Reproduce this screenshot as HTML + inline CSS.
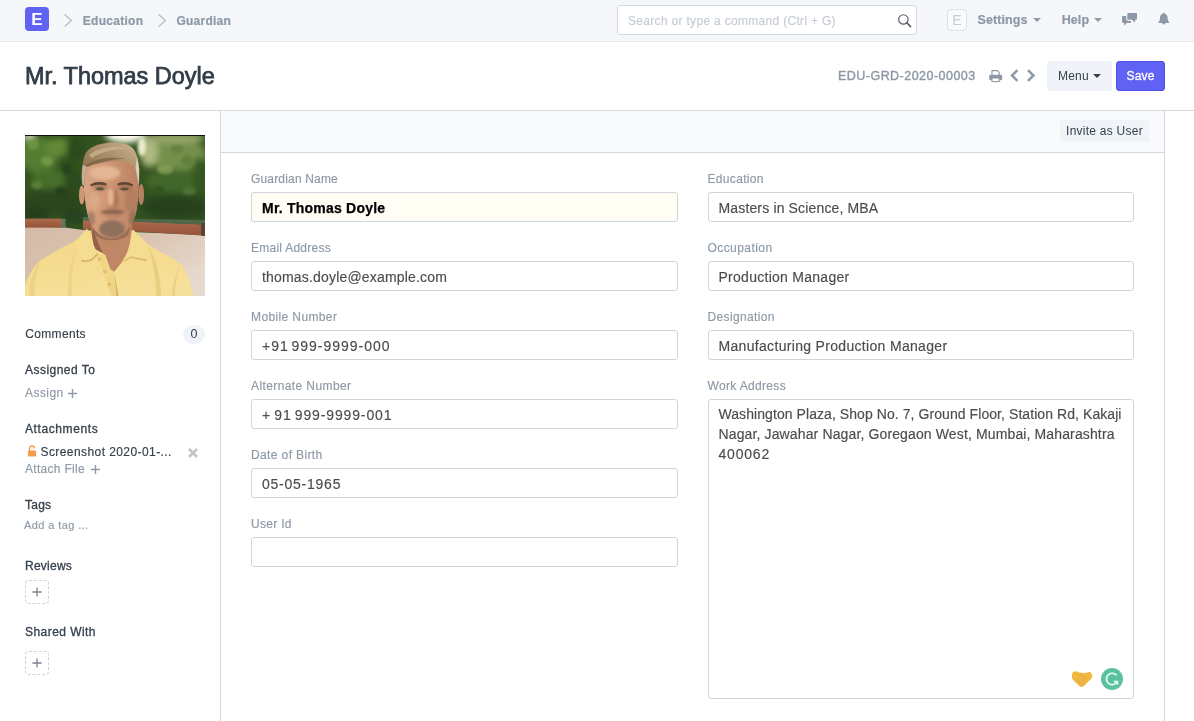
<!DOCTYPE html>
<html lang="en">
<head>
<meta charset="utf-8">
<title>Mr. Thomas Doyle - Guardian</title>
<style>
*{box-sizing:border-box;margin:0;padding:0}
html,body{width:1194px;height:721px;overflow:hidden;background:#fff}
body{will-change:transform;font-family:"Liberation Sans",sans-serif;font-size:12px;color:#36414c;position:relative}
.abs{position:absolute;white-space:nowrap}
.t{position:absolute;white-space:nowrap;line-height:16px;height:16px;-webkit-text-stroke:0.15px}
/* navbar */
#nav{position:absolute;left:0;top:0;width:1194px;height:42px;background:#f5f7fa;border-bottom:1px solid #e6eaee}
#logo{position:absolute;left:25px;top:7px;width:24px;height:24px;border-radius:4px;background:#6062f4;color:#fff;font-weight:bold;font-size:17px;line-height:25px;text-align:center}
.crumb{font-weight:bold;color:#8d99a6;font-size:12px;-webkit-text-stroke:0.2px #8d99a6}
#search{position:absolute;left:617px;top:5px;width:300px;height:30px;border:1px solid #d4d9de;border-radius:3px;background:#fff}
.ph{color:#c5ccd3;font-size:12px}
#avatar{position:absolute;left:947px;top:9px;width:20px;height:22px;border:1px solid #dce1e6;border-radius:4px;background:#fafbfc;color:#c6cdd4;font-size:14px;line-height:20px;text-align:center}
.navlink{font-weight:bold;color:#8d99a6;font-size:12px;-webkit-text-stroke:0.2px #8d99a6}
.caret{position:absolute;width:0;height:0;border-left:4px solid transparent;border-right:4px solid transparent;border-top:4px solid #8d99a6}
/* page head */
#head{position:absolute;left:0;top:42px;width:1194px;height:69px;background:#fff;border-bottom:1px solid #d1d8dd}
#title{position:absolute;left:25px;top:61px;font-size:23.5px;line-height:30px;color:#323c48;white-space:nowrap;-webkit-text-stroke:0.75px #323c48;letter-spacing:-0.03px}
.btn{position:absolute;height:30px;border-radius:3px;font-size:12px;line-height:30px;text-align:center;white-space:nowrap}
/* sidebar */
#vline1{position:absolute;left:220px;top:111px;width:1px;height:610px;background:#d4d8de}
#vline2{position:absolute;left:1164px;top:111px;width:1px;height:610px;background:#d4d8de}
#formhead{position:absolute;left:221px;top:111px;width:943px;height:42px;background:#f8fafc;border-bottom:1px solid #d1d8dd}
.sb-label{color:#36414c;font-size:12px}
.sb-muted{color:#8d99a6;font-size:12px}
.plusbox{position:absolute;width:24px;height:24px;border:1px dashed #ccd2d8;border-radius:4px}
.plusbox svg{position:absolute;left:6px;top:6px}
/* form */
.lbl{position:absolute;white-space:nowrap;color:#8d99a6;font-size:12px;line-height:16px;-webkit-text-stroke:0.15px}
.inp{position:absolute;height:30px;border:1px solid #cfd5da;border-radius:3px;background:#fff;font-size:14px;line-height:28px;padding:1px 0 0 10px;color:#4c4c4c;white-space:nowrap;overflow:hidden;letter-spacing:0.18px;-webkit-text-stroke:0.15px}
.inp.bold{background:#fffdf4;font-weight:bold;color:#000;-webkit-text-stroke:0.25px;letter-spacing:0.22px;padding-top:1px}
#ta{position:absolute;left:708px;top:399px;width:426px;height:300px;border:1px solid #cfd5da;border-radius:3px;background:#fff;font-size:14px;line-height:20px;padding:4px 9.5px;color:#4c4c4c;letter-spacing:0.07px;-webkit-text-stroke:0.15px}
</style>
</head>
<body>
<div id="nav">
  <div id="logo">E</div>
  <svg class="abs" style="left:62px;top:12px" width="12" height="17" viewBox="0 0 12 17"><path d="M2.6 2.5 L9.4 8.5 L2.6 14.5" fill="none" stroke="#b9c1c9" stroke-width="1.5"/></svg>
  <div class="t crumb" style="left:82.8px;top:13px;letter-spacing:0.27px">Education</div>
  <svg class="abs" style="left:156px;top:12px" width="12" height="17" viewBox="0 0 12 17"><path d="M2.6 2.5 L9.4 8.5 L2.6 14.5" fill="none" stroke="#b9c1c9" stroke-width="1.5"/></svg>
  <div class="t crumb" style="left:176.5px;top:13px;letter-spacing:0.22px">Guardian</div>
  <div id="search"></div>
  <div class="t ph" style="left:628px;top:12.7px;letter-spacing:0.31px">Search or type a command (Ctrl + G)</div>
  <svg class="abs" style="left:896px;top:12px" width="17" height="17" viewBox="0 0 17 17"><circle cx="7.4" cy="7.4" r="4.7" fill="none" stroke="#555d66" stroke-width="1.15"/><path d="M10.9 10.9 L14.6 14.6" stroke="#555d66" stroke-width="1.5" stroke-linecap="round"/></svg>
  <div id="avatar">E</div>
  <div class="t navlink" style="left:977.5px;top:12px;font-size:12.5px;letter-spacing:0.1px">Settings</div>
  <div class="caret" style="left:1033px;top:18px"></div>
  <div class="t navlink" style="left:1061.7px;top:12px;font-size:12.5px;letter-spacing:0.1px">Help</div>
  <div class="caret" style="left:1094px;top:18px"></div>
  <svg class="abs" style="left:1121px;top:12px" width="18" height="16" viewBox="0 0 18 16"><path d="M2 4 H9 a1 1 0 0 1 1 1 V9.9 a1 1 0 0 1 -1 1 H5.6 L3.2 14 L3.2 10.9 H2 a1 1 0 0 1 -1 -1 V5 a1 1 0 0 1 1 -1z" fill="#8d99a6"/><path d="M7.3 1.1 H15 a1 1 0 0 1 1 1 V6.8 a1 1 0 0 1 -1 1 H14.2 L14 10.8 L11 7.8 H7.3 a1 1 0 0 1 -1 -1 V2.1 a1 1 0 0 1 1 -1z" fill="#8d99a6" stroke="#f5f7fa" stroke-width="2.2" paint-order="stroke"/></svg>
  <svg class="abs" style="left:1157px;top:12px" width="14" height="14" viewBox="0 0 14 14"><path d="M6.8 0.8 C7.4 0.8 7.8 1.2 7.8 1.8 C9.6 2.3 10.6 3.8 10.6 5.8 C10.6 8 11.1 9.2 12.2 10.2 L12.2 10.9 L1.4 10.9 L1.4 10.2 C2.5 9.2 3 8 3 5.8 C3 3.8 4 2.3 5.8 1.8 C5.8 1.2 6.2 0.8 6.8 0.8 Z M5.3 10.9 H8.3 A1.5 1.7 0 0 1 5.3 10.9 Z" fill="#8d99a6"/></svg>
</div>

<div id="head"></div>
<div id="title">Mr. Thomas Doyle</div>
<div class="t" style="left:838px;top:68px;color:#8d99a6;font-size:12.5px;letter-spacing:0.47px;-webkit-text-stroke:0.4px #8d99a6">EDU-GRD-2020-00003</div>
<svg class="abs" style="left:988px;top:69px" width="16" height="15" viewBox="0 0 16 15"><path d="M4 6 V1.6 h5.4 l1.8 1.8 V6" fill="#fff" stroke="#8d99a6" stroke-width="1.1"/><rect x="1.2" y="5.8" width="13" height="5.4" rx="1.2" fill="#8d99a6"/><rect x="4" y="9" width="7.2" height="3.6" fill="#fff" stroke="#8d99a6" stroke-width="1.1"/></svg>
<svg class="abs" style="left:1009px;top:68px" width="12" height="16" viewBox="0 0 12 16"><path d="M8.4 2.1 L3 7.5 L8.4 12.9" fill="none" stroke="#8d99a6" stroke-width="2.5"/></svg>
<svg class="abs" style="left:1025px;top:68px" width="12" height="16" viewBox="0 0 12 16"><path d="M3 2.1 L8.4 7.5 L3 12.9" fill="none" stroke="#8d99a6" stroke-width="2.5"/></svg>
<div class="btn" style="left:1047px;top:61px;width:65px;background:#f0f3f7;color:#36414c;text-align:left;padding-left:11px;letter-spacing:0.2px">Menu</div>
<div class="caret" style="left:1093px;top:74px;border-top-color:#36414c"></div>
<div class="btn" style="left:1116px;top:61px;width:49px;background:#6062f4;color:#fff;border:1px solid #4d4fe0;line-height:28px;letter-spacing:0.15px;-webkit-text-stroke:0.3px #fff">Save</div>

<div id="vline1"></div>
<div id="vline2"></div>
<div id="formhead"></div>
<div class="btn" style="left:1060px;top:120px;width:89px;height:22px;line-height:22px;background:#f0f3f7;color:#36414c;letter-spacing:0.25px">Invite as User</div>

<!-- sidebar -->
<svg id="photo" class="abs" style="left:25px;top:135px" width="180" height="161" viewBox="0 0 180 161">
<defs>
<filter id="b05" x="-20%" y="-20%" width="140%" height="140%"><feGaussianBlur stdDeviation="0.45"/></filter>
<filter id="b1" x="-20%" y="-20%" width="140%" height="140%"><feGaussianBlur stdDeviation="0.8"/></filter>
<filter id="b2" x="-30%" y="-30%" width="160%" height="160%"><feGaussianBlur stdDeviation="1.8"/></filter>
<filter id="b4" x="-40%" y="-40%" width="180%" height="180%"><feGaussianBlur stdDeviation="3.2"/></filter>
<clipPath id="fc"><path d="M58.5 34 C60 26 72 22 88 22 C104 22 112 26 113.5 34 C114.5 46 114 60 111.5 76 C109 88 102 98 94 102 C89 104 82 104 77 101 C70 97 65 89 62.5 79 C59.5 66 58 48 58.5 34 Z"/></clipPath><clipPath id="pc"><rect x="0" y="0" width="180" height="161"/></clipPath>
<linearGradient id="pave" x1="0" y1="0" x2="1" y2="0.6"><stop offset="0" stop-color="#d3baa6"/><stop offset="0.6" stop-color="#dbc5b3"/><stop offset="1" stop-color="#e6d8cc"/></linearGradient>
<linearGradient id="skin" x1="0" y1="0" x2="1" y2="0"><stop offset="0" stop-color="#d9a583"/><stop offset="0.45" stop-color="#cf9674"/><stop offset="1" stop-color="#ba8263"/></linearGradient>
<linearGradient id="hair" x1="0" y1="1" x2="1" y2="0"><stop offset="0" stop-color="#7a5f45"/><stop offset="0.5" stop-color="#a48764"/><stop offset="1" stop-color="#cdb48e"/></linearGradient>
<linearGradient id="shirt" x1="0" y1="0" x2="0.3" y2="1"><stop offset="0" stop-color="#f3d786"/><stop offset="1" stop-color="#f6df98"/></linearGradient>
<linearGradient id="brick" x1="0" y1="0" x2="0" y2="1"><stop offset="0" stop-color="#ad6a4b"/><stop offset="1" stop-color="#95533b"/></linearGradient>
</defs>
<g clip-path="url(#pc)">
<rect x="0" y="0" width="180" height="100" fill="#33521f"/>
<g filter="url(#b4)">
  <ellipse cx="14" cy="20" rx="20" ry="18" fill="#557d32"/>
  <ellipse cx="34" cy="12" rx="14" ry="9" fill="#648a38"/>
  <ellipse cx="50" cy="14" rx="9" ry="12" fill="#2b481c"/>
  <ellipse cx="26" cy="44" rx="20" ry="10" fill="#476d2b"/>
  <ellipse cx="48" cy="46" rx="9" ry="12" fill="#2c4a1e"/>
  <ellipse cx="26" cy="68" rx="34" ry="12" fill="#29451e"/>
  <ellipse cx="8" cy="80" rx="16" ry="6" fill="#253e1b"/>
  <ellipse cx="50" cy="82" rx="12" ry="7" fill="#264222"/>
  <ellipse cx="152" cy="20" rx="30" ry="16" fill="#74904c"/>
  <ellipse cx="124" cy="16" rx="9" ry="16" fill="#b0b982"/>
  <ellipse cx="150" cy="3" rx="30" ry="6" fill="#95a568"/>
  <ellipse cx="150" cy="46" rx="30" ry="12" fill="#42662c"/>
  <ellipse cx="150" cy="72" rx="34" ry="13" fill="#28431d"/>
  <ellipse cx="174" cy="40" rx="7" ry="18" fill="#345824"/>
  <ellipse cx="100" cy="-1" rx="20" ry="9" fill="#ffffef"/>
  <ellipse cx="4" cy="1" rx="6" ry="3.5" fill="#e6eccf"/>
</g>
<g filter="url(#b2)">
  <ellipse cx="22" cy="26" rx="6" ry="5" fill="#719744"/>
  <ellipse cx="42" cy="34" rx="5" ry="6" fill="#28431a"/>
  <ellipse cx="8" cy="10" rx="6" ry="5" fill="#6a9240"/>
  <ellipse cx="12" cy="50" rx="6" ry="4" fill="#577f35"/>
  <ellipse cx="36" cy="56" rx="6" ry="4" fill="#253f1a"/>
  <ellipse cx="140" cy="34" rx="8" ry="5" fill="#7d9a50"/>
  <ellipse cx="162" cy="26" rx="6" ry="6" fill="#62803e"/>
  <ellipse cx="134" cy="56" rx="6" ry="5" fill="#305422"/>
  <ellipse cx="164" cy="56" rx="7" ry="4" fill="#4c7331"/>
  <ellipse cx="152" cy="14" rx="7" ry="4" fill="#66803f"/>
  <ellipse cx="117" cy="12" rx="4" ry="9" fill="#e9ebcc"/>
</g>
<polygon points="0,91.5 40,92.5 58,95 180,100 180,161 0,161" fill="url(#pave)"/>
<g filter="url(#b05)">
  <rect x="-2" y="83.6" width="39" height="9" fill="url(#brick)"/>
  <rect x="37" y="83.8" width="3.5" height="9" fill="#5d7a68"/>
  <polygon points="58,85 120,87 176.5,89.5 176.5,100.5 120,97 58,94.5" fill="url(#brick)"/>
  <polygon points="58,82 108,84 180,85 180,89.5 108,86.8 58,85.5" fill="#50684a"/>
  <rect x="176.3" y="88" width="4" height="13" fill="#5e4034"/>
</g>
<!-- shirt body -->
<g filter="url(#b05)">
<path d="M-1 161 L-1 153 C2 142 8 132 16 125 C24 120 36 113 49 106.5 L62 96 L108 96 L124 110.5 C132 115 146 122 156 129 C162 136 165 146 168.5 161 Z" fill="url(#shirt)"/>
<path d="M16 126 C11 136 9 148 10 161 L4 161 C4 148 8 134 16 126 Z" fill="#e9cc7c" opacity="0.6"/>
<path d="M124 112 C132 126 136 144 136 161 L131 161 C131 146 128 128 124 112 Z" fill="#e6c877" opacity="0.7"/>
<path d="M52 112 C48 124 46 142 47 161 L43 161 C42 142 46 124 52 112 Z" fill="#e9cc7c" opacity="0.6"/>
<path d="M156 130 C152 140 150 150 150 161 L147 161 C147 150 151 138 156 130 Z" fill="#e6c877" opacity="0.6"/>
<!-- neck -->
<path d="M66 88 L66.5 96 C67.5 104 68.5 110 70 114 L80.5 119.5 L85 134 L89 137 L97 127 L104.5 113.5 L106.5 96 L107 88 Z" fill="#c08766"/>
<path d="M66.5 96 C67.5 104 68.5 110 70 114 L80.5 119.5 L84 128 C78 119 71.5 106 68.5 94 Z" fill="#93644a"/>
<path d="M70 100 C76 107 96 107 103 100 L105.5 92 L67 92 Z" fill="#9c6c52"/>
<!-- collars -->
<path d="M62 93.5 L49.5 108 C52 115 54 121 56.5 126.5 C60 127.5 64 127 67 125.5 L73.5 119.5 C69 112 65 102 62 93.5 Z" fill="#f4dc90"/>
<path d="M56.5 126.5 C60 127.5 64 127 67 125.5 L73.5 119.5 L72.5 118 L66 124 C63 125.3 59.5 125.6 56 124.6 Z" fill="#d8b768"/>
<path d="M107.5 94 L123.5 110 C123 116 122.5 121 121.5 126 L106 123 L98.5 127 C103 117 106 106 107.5 94 Z" fill="#f4dc90"/>
<path d="M121.5 126 L106 123 L98.5 127 L99.5 125.2 L106 121.6 L121.8 124.4 Z" fill="#d8b768"/>
<!-- placket -->
<path d="M73 119.5 L80.5 119.5 L85 134 L89 137 L91 161 L86 161 Z" fill="#f0d584"/>
<path d="M89 137 L91.5 161 L93.5 161 Z" fill="#cfae62"/>
<circle cx="74.4" cy="124" r="1.7" fill="#dcbb70"/><circle cx="79.6" cy="136.6" r="1.7" fill="#dcbb70"/><circle cx="84.2" cy="149.2" r="1.7" fill="#dcbb70"/>
</g>
<!-- head -->
<g filter="url(#b05)">
<ellipse cx="56.8" cy="60" rx="2.8" ry="9.5" fill="#cf9574"/>
<ellipse cx="116.2" cy="59.5" rx="2.8" ry="10.5" fill="#b98264"/>
<path id="facep" d="M58.5 34 C60 26 72 22 88 22 C104 22 112 26 113.5 34 C114.5 46 114 60 111.5 76 C109 88 102 98 94 102 C89 104 82 104 77 101 C70 97 65 89 62.5 79 C59.5 66 58 48 58.5 34 Z" fill="url(#skin)"/>
<g clip-path="url(#fc)">
<g filter="url(#b2)">
<ellipse cx="80" cy="38" rx="15" ry="7" fill="#e4b695"/>
<ellipse cx="69" cy="66" rx="6" ry="8" fill="#dba888"/>
<ellipse cx="106" cy="66" rx="7" ry="12" fill="#b67e60"/>
<ellipse cx="75" cy="52.5" rx="7" ry="3.2" fill="#a97a5c"/>
<ellipse cx="100" cy="52.5" rx="7" ry="3.2" fill="#a37356"/>
<ellipse cx="87" cy="94" rx="13" ry="9" fill="#8f6f5c"/>
<ellipse cx="66" cy="84" rx="4" ry="8" fill="#a88068"/>
<ellipse cx="108" cy="84" rx="4" ry="8" fill="#9a725a"/>
<ellipse cx="87.5" cy="77" rx="12" ry="2.6" fill="#86604c"/>
</g>
<g filter="url(#b1)">
<ellipse cx="85.5" cy="62" rx="2.6" ry="8" fill="#e3b697"/>
<path d="M90.5 52 C93.5 60 95 66 93 70.5 C91.5 71.5 89.5 71.5 88.5 70.5 C89.5 64 90 58 90.5 52 Z" fill="#ad7758"/>
<path d="M81 70.5 C84.5 73 91 73 95 70.5 C92 74.5 84 74.5 81 70.5 Z" fill="#93614a"/>
<path d="M77.5 80.3 C83 81.8 92 81.8 98 80.3 C93 83.6 82.5 83.6 77.5 80.3 Z" fill="#b47766"/>
</g>
</g>
<path d="M65.5 49.6 C70 46.6 76 46.4 81.5 48.4 L81.5 50.6 C76 49.2 70 49.6 65.5 51.6 Z" fill="#5f4636"/>
<path d="M92.5 48.4 C97.5 46.4 103.5 46.6 108 49.6 L108 51.6 C103.5 49.6 97.5 49.2 92.5 50.6 Z" fill="#5f4636"/>
<ellipse cx="75" cy="53.9" rx="3.8" ry="1.4" fill="#5f5442"/>
<ellipse cx="99.5" cy="54.1" rx="4" ry="1.4" fill="#5c4f3e"/>
<!-- hair -->
<path d="M57.3 50 C56 40 56.5 28 60.7 18 C65 12 72 9 82 8 C92 6.5 104 8.5 108 13.5 C112 18 113.5 26 114.2 34 L114 50 C112.5 45 112 39 110.5 33 C106 27.5 98 26 90 26 C80 26.5 70 28.5 62 32 C60.5 38 59.5 44 59 50 Z" fill="url(#hair)"/>
<path d="M64 20 C72 12.5 90 9.5 106 14 C94 13 78 15.5 67 23 Z" fill="#c9b38c" opacity="0.8"/>
<path d="M61 30 C70 24 84 21.5 100 23.5 C88 24.5 74 26.5 62.5 32 Z" fill="#77603f" opacity="0.7"/>
<path d="M110.5 33 C112 39 112.5 45 114 50 L114.2 34 C113.8 30 113 26 112 22 Z" fill="#d9cfbd"/>
<path d="M57.3 50 C56.6 44 56.6 37 57.6 30 C59 30.5 60.5 31 62 32 C60.5 38 59.5 44 59 50 Z" fill="#c2ad96"/>
</g>
</g>
<rect x="0" y="0" width="180" height="1" fill="#0d0d0d"/>
</svg>


<div class="t sb-label" style="left:25.3px;top:326px;letter-spacing:0.33px">Comments</div>
<div class="abs" style="left:183px;top:325px;width:22px;height:19px;border-radius:9.5px;background:#f0f3f7;color:#36414c;font-size:12.5px;line-height:18px;text-align:center">0</div>
<div class="t sb-label" style="left:25px;top:362px;letter-spacing:0.47px;-webkit-text-stroke:0.3px #36414c">Assigned To</div>
<div class="t sb-muted" style="left:25px;top:385px;letter-spacing:0.45px">Assign</div>
<svg class="abs" style="left:67px;top:388px" width="11" height="11" viewBox="0 0 11 11"><path d="M5.5 1 V10 M1 5.5 H10" stroke="#8d99a6" stroke-width="1.4" fill="none"/></svg>
<div class="t sb-label" style="left:25px;top:421px;letter-spacing:0.6px;-webkit-text-stroke:0.3px #36414c">Attachments</div>
<svg class="abs" style="left:27px;top:445px" width="10" height="12" viewBox="0 0 10 12"><path d="M2.5 6 v-2.5 a2.5 2.5 0 0 1 5 0" fill="none" stroke="#f39c4b" stroke-width="1.4"/><rect x="1" y="5.5" width="8" height="6" rx="1" fill="#f39c4b"/></svg>
<div class="t sb-label" style="left:40.5px;top:444px;letter-spacing:0.42px">Screenshot 2020-01-...</div>
<svg class="abs" style="left:187px;top:447px" width="12" height="12" viewBox="0 0 12 12"><path d="M2 2 L10 10 M10 2 L2 10" stroke="#c2c4c6" stroke-width="2.6"/></svg>
<div class="t sb-muted" style="left:25px;top:461px;letter-spacing:0.3px">Attach File</div>
<svg class="abs" style="left:89.5px;top:464px" width="11" height="11" viewBox="0 0 11 11"><path d="M5.5 1 V10 M1 5.5 H10" stroke="#8d99a6" stroke-width="1.4" fill="none"/></svg>
<div class="t sb-label" style="left:25px;top:497px;letter-spacing:0.25px;-webkit-text-stroke:0.3px #36414c">Tags</div>
<div class="t sb-muted" style="left:24px;top:517px;font-size:11px;letter-spacing:0.4px">Add a tag ...</div>
<div class="t sb-label" style="left:25px;top:558px;letter-spacing:0.25px;-webkit-text-stroke:0.3px #36414c">Reviews</div>
<div class="plusbox" style="left:25px;top:580px"><svg width="10" height="10" viewBox="0 0 10 10"><path d="M5 0.4 V9.6 M0.4 5 H9.6" stroke="#7a8591" stroke-width="1.3" fill="none"/></svg></div>
<div class="t sb-label" style="left:25px;top:624px;letter-spacing:0.45px;-webkit-text-stroke:0.3px #36414c">Shared With</div>
<div class="plusbox" style="left:25px;top:651px"><svg width="10" height="10" viewBox="0 0 10 10"><path d="M5 0.4 V9.6 M0.4 5 H9.6" stroke="#7a8591" stroke-width="1.3" fill="none"/></svg></div>

<!-- form left -->
<div class="lbl" style="left:251px;top:171px;letter-spacing:0.17px">Guardian Name</div>
<div class="inp bold" style="left:251px;top:192px;width:427px">Mr. Thomas Doyle</div>
<div class="lbl" style="left:251px;top:240px;letter-spacing:0.25px">Email Address</div>
<div class="inp" style="left:251px;top:261px;width:427px">thomas.doyle@example.com</div>
<div class="lbl" style="left:251px;top:309px;letter-spacing:0.38px">Mobile Number</div>
<div class="inp" style="left:251px;top:330px;width:427px;letter-spacing:0.98px;word-spacing:-2px">+91 999-9999-000</div>
<div class="lbl" style="left:251px;top:378px;letter-spacing:0.4px">Alternate Number</div>
<div class="inp" style="left:251px;top:399px;width:427px;letter-spacing:0.86px;word-spacing:-1.5px">+ 91 999-9999-001</div>
<div class="lbl" style="left:251px;top:447px;letter-spacing:0.38px">Date of Birth</div>
<div class="inp" style="left:251px;top:468px;width:427px;letter-spacing:0.76px">05-05-1965</div>
<div class="lbl" style="left:251px;top:516px;letter-spacing:0.3px">User Id</div>
<div class="inp" style="left:251px;top:537px;width:427px"></div>

<!-- form right -->
<div class="lbl" style="left:707.5px;top:171px;letter-spacing:0.32px">Education</div>
<div class="inp" style="left:708px;top:192px;width:426px;letter-spacing:0.15px;padding-left:9.5px">Masters in Science, MBA</div>
<div class="lbl" style="left:707.5px;top:240px;letter-spacing:0.43px">Occupation</div>
<div class="inp" style="left:708px;top:261px;width:426px;letter-spacing:0.27px;padding-left:9.5px">Production Manager</div>
<div class="lbl" style="left:707.5px;top:309px;letter-spacing:0.36px">Designation</div>
<div class="inp" style="left:708px;top:330px;width:426px;letter-spacing:0.32px;padding-left:9.5px">Manufacturing Production Manager</div>
<div class="lbl" style="left:707.5px;top:378px;letter-spacing:0.34px">Work Address</div>
<div id="ta">Washington Plaza, Shop No. 7, Ground Floor, Station Rd, Kakaji<br><span style="letter-spacing:0.13px">Nagar, Jawahar Nagar, Goregaon West, Mumbai, Maharashtra</span><br><span style="letter-spacing:0.8px">400062</span></div>
<svg class="abs" style="left:1070px;top:669px" width="24" height="20" viewBox="0 0 24 20"><path d="M2 5.2 C2.6 3 4.6 1.6 6.6 2.6 L9.5 3.6 C11 4.2 15 4 17.2 3.4 C18.6 2.4 20.6 2.8 21.6 4.4 C22.8 6.2 22.6 8.4 21 10 L14.4 16.4 C12.8 18 11 18.4 9.6 17.2 L4 12 C2 10.2 1.4 7.6 2 5.2 Z" fill="#f2b844"/><path d="M8.5 7.5 L10.5 5 L14 7.2 L16.5 9.5 M11 10.5 L15 13.8 M12.8 9 L16.6 12.2 M8.8 12.4 L12.6 15.6 M6.8 11 L10.4 14.2" fill="none" stroke="#e0a030" stroke-width="0.8" stroke-linecap="round" opacity="0.8"/></svg>
<svg class="abs" style="left:1101px;top:668px" width="22" height="22" viewBox="0 0 22 22"><circle cx="11" cy="11" r="11" fill="#5cc1a0"/><path d="M15.5 7.3 A5.7 5.7 0 1 0 16.2 13.6" fill="none" stroke="#e6fff8" stroke-width="1.7"/><path d="M12.6 13.1 H17 V16.8 Z" fill="#e6fff8" stroke="#e6fff8" stroke-width="0.6" stroke-linejoin="round"/></svg>
</body>
</html>
